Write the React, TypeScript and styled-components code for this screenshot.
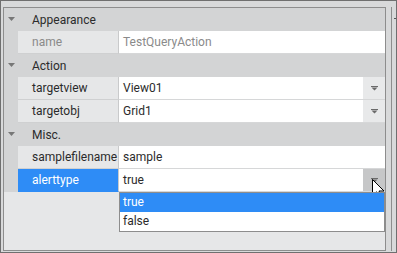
import React from 'react';
import styled, { createGlobalStyle } from 'styled-components';

const GlobalStyle = createGlobalStyle`
    body {
        margin: 0;
        font-family: Roboto, "Liberation Sans", sans-serif;
        font-size: 12px;
    }
`;

type Prop = {
    name: string;
    value: string;
    readOnly?: boolean;
    dropdown?: boolean;
    selected?: boolean;
    open?: boolean;
};

type Category = {
    title: string;
    props: Prop[];
};

const categories: Category[] = [
    { title: 'Appearance', props: [{ name: 'name', value: 'TestQueryAction', readOnly: true }] },
    {
        title: 'Action',
        props: [
            { name: 'targetview', value: 'View01', dropdown: true },
            { name: 'targetobj', value: 'Grid1', dropdown: true },
        ],
    },
    {
        title: 'Misc.',
        props: [
            { name: 'samplefilename', value: 'sample' },
            { name: 'alerttype', value: 'true', dropdown: true, selected: true, open: true },
        ],
    },
];

const options = ['true', 'false'];

const ExpandArrow = () => (
    <svg width="7" height="4" viewBox="0 0 7 4">
        <path d="M0 0 H7 L3.5 4 Z" fill="#777" />
    </svg>
);

const DropArrow = () => (
    <svg width="7" height="5" viewBox="0 0 7 5">
        <path d="M0 0 H7 V1 H0 Z M0.5 1.5 H6.5 L3.5 4.5 Z" fill="#6a6a6a" />
    </svg>
);

const Cursor = () => (
    <svg width="13" height="21" viewBox="0 0 13 21">
        <path
            d="M0.5 0.5 L0.5 16.5 L4.5 12.8 L7.2 19.3 L9.6 18.3 L7 12 L12 12 Z"
            fill="#fff"
            stroke="#000"
            strokeWidth="1"
            strokeLinejoin="miter"
        />
    </svg>
);

export default function App() {
    return (
        <>
            <GlobalStyle />
            <Frame>
                <Grid>
                    {categories.map((cat) => (
                        <React.Fragment key={cat.title}>
                            <Header>
                                <Gutter>
                                    <ExpandArrow />
                                </Gutter>
                                <HeaderTitle>{cat.title}</HeaderTitle>
                            </Header>
                            {cat.props.map((p) => (
                                <Row key={p.name}>
                                    <Gutter />
                                    <Label selected={p.selected} readOnly={p.readOnly}>
                                        {p.name}
                                    </Label>
                                    <Value>
                                        <ValueText readOnly={p.readOnly}>{p.value}</ValueText>
                                        {p.dropdown && (
                                            <DropButton hover={p.open}>
                                                <DropArrow />
                                                {p.open && (
                                                    <CursorWrap>
                                                        <Cursor />
                                                    </CursorWrap>
                                                )}
                                            </DropButton>
                                        )}
                                        {p.open && (
                                            <List>
                                                {options.map((o) => (
                                                    <Option key={o} active={o === p.value}>
                                                        {o}
                                                    </Option>
                                                ))}
                                            </List>
                                        )}
                                    </Value>
                                </Row>
                            ))}
                        </React.Fragment>
                    ))}
                </Grid>
                <Strip>
                    <Tick />
                </Strip>
            </Frame>
        </>
    );
}

const Frame = styled.div`
    width: 397px;
    height: 253px;
    box-sizing: border-box;
    border: 1px solid #6f6f6f;
    background: #d8d9da;
    padding: 6px 0 1px 2px;
    display: flex;
`;

const Grid = styled.div`
    width: 383px;
    box-sizing: border-box;
    border: 1px solid #8d8d8d;
    background: #e6e7e8;
    display: flex;
    flex-direction: column;
`;

const Strip = styled.div`
    flex: 1;
    margin-left: 5px;
    border-left: 1px solid #8d8d8d;
    padding-top: 11px;
`;

const Tick = styled.div`
    width: 2px;
    height: 1px;
    margin-left: 2px;
    background: #555;
`;

const Header = styled.div`
    display: flex;
    height: 23px;
    background: #d3d4d5;
    color: #2b2b2b;
    align-items: center;
`;

const Gutter = styled.div`
    width: 14px;
    flex-shrink: 0;
    align-self: stretch;
    background: #d3d4d5;
    display: flex;
    align-items: center;
    justify-content: center;
    padding-bottom: 1px;
    box-sizing: border-box;
`;

const HeaderTitle = styled.div`
    padding-left: 14px;
    line-height: 22px;
`;

const Row = styled.div`
    display: flex;
    height: 23px;
`;

const Label = styled.div<{ selected?: boolean; readOnly?: boolean }>`
    width: 101px;
    box-sizing: border-box;
    padding-left: 14px;
    line-height: 22px;
    border-bottom: 1px solid ${({ selected }) => (selected ? '#2e8cf6' : '#cfd0d1')};
    border-right: 1px solid #c9cacb;
    background: ${({ selected }) => (selected ? '#2e8cf6' : '#e6e7e8')};
    color: ${({ selected, readOnly }) => (selected ? '#fff' : readOnly ? '#8a8a8a' : '#2b2b2b')};
    white-space: nowrap;
`;

const Value = styled.div`
    flex: 1;
    display: flex;
    position: relative;
    background: #fff;
    border-bottom: 1px solid #d6d7d8;
`;

const ValueText = styled.div<{ readOnly?: boolean }>`
    flex: 1;
    padding-left: 4px;
    line-height: 22px;
    color: ${({ readOnly }) => (readOnly ? '#8a8a8a' : '#2b2b2b')};
`;

const DropButton = styled.div<{ hover?: boolean }>`
    width: 22px;
    position: relative;
    background: ${({ hover }) => (hover ? '#c6c7c8' : '#e8e9ea')};
    display: flex;
    align-items: center;
    justify-content: center;
`;

const CursorWrap = styled.div`
    position: absolute;
    left: 9px;
    top: 10px;
    line-height: 0;
`;

const List = styled.div`
    position: absolute;
    top: 23px;
    left: 0;
    right: 0;
    background: #fff;
    border: 1px solid #8d8d8d;
    z-index: 1;
`;

const Option = styled.div<{ active?: boolean }>`
    height: 19px;
    line-height: 19px;
    padding-left: 3px;
    background: ${({ active }) => (active ? '#2e8cf6' : '#fff')};
    color: ${({ active }) => (active ? '#fff' : '#2b2b2b')};
`;
